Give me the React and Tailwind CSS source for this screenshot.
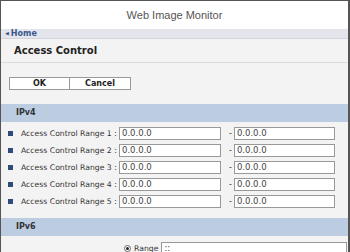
import React from 'react';

const ranges = [1, 2, 3, 4, 5];

const SectionHeader = ({ title }) => (
  <div className="h-[18px] bg-[#bccce1] pl-[15px] flex items-center text-[8px] font-bold text-[#333]">
    {title}
  </div>
);

const App = () => {
  return (
    <div className="w-[350px] h-[252px] overflow-hidden border-t border-l border-r-2 border-[#555] bg-[#f3f3f3] font-['DejaVu_Sans',sans-serif]">
      <header className="h-[28px] bg-white flex items-center justify-center">
        <span className="text-[11px] text-[#555] font-['Liberation_Sans',sans-serif]">Web Image Monitor</span>
      </header>

      <div className="h-[10px] bg-[#e4e4ec] border-b border-[#d4d4dc] flex items-center pl-[4px] text-[8px] font-bold text-[#37588e] leading-none">
        <span className="text-[5px] mr-[2px]">◀</span>Home
      </div>

      <div className="h-[24px] flex items-center pl-[13px] border-b border-[#dcdcdc]">
        <h1 className="text-[10px] font-bold text-[#222]">Access Control</h1>
      </div>

      <div className="pt-[14px] pl-[8px] flex">
        <button className="w-[61px] h-[13px] bg-white border border-[#999] text-[8px] font-bold text-[#222] leading-none">OK</button>
        <button className="w-[61px] h-[13px] bg-white border border-l-0 border-[#999] text-[8px] font-bold text-[#222] leading-none">Cancel</button>
      </div>

      <div className="mt-[14px]">
        <SectionHeader title="IPv4" />
        <div className="pt-[5px] flex flex-col gap-[4px]">
          {ranges.map((n) => (
            <div key={n} className="flex items-center h-[13px]">
              <span className="ml-[7px] w-[5px] h-[5px] bg-[#304b7a]"></span>
              <span className="ml-[8px] w-[98px] text-[7.7px] text-[#333] whitespace-nowrap">Access Control Range {n} :</span>
              <div className="w-[102px] h-[13px] bg-white border border-[#999] text-[8.5px] text-[#444] pl-[2px] flex items-center">0.0.0.0</div>
              <span className="ml-[8px] text-[8px] text-[#333]">-</span>
              <div className="ml-[2px] w-[101px] h-[13px] bg-white border border-[#999] text-[8.5px] text-[#444] pl-[2px] flex items-center">0.0.0.0</div>
            </div>
          ))}
        </div>
      </div>

      <div className="mt-[10px]">
        <SectionHeader title="IPv6" />
        <div className="pt-[6px] flex items-center">
          <span className="ml-[123px] w-[7px] h-[7px] rounded-full border border-[#666] bg-white flex items-center justify-center">
            <span className="w-[3px] h-[3px] rounded-full bg-[#222]"></span>
          </span>
          <span className="ml-[3px] text-[7.7px] text-[#333]">Range</span>
          <div className="ml-[3px] w-[186px] h-[13px] bg-white border border-[#999] text-[8.5px] text-[#444] pl-[2px] flex items-center">::</div>
        </div>
      </div>
    </div>
  );
};

export default App;
